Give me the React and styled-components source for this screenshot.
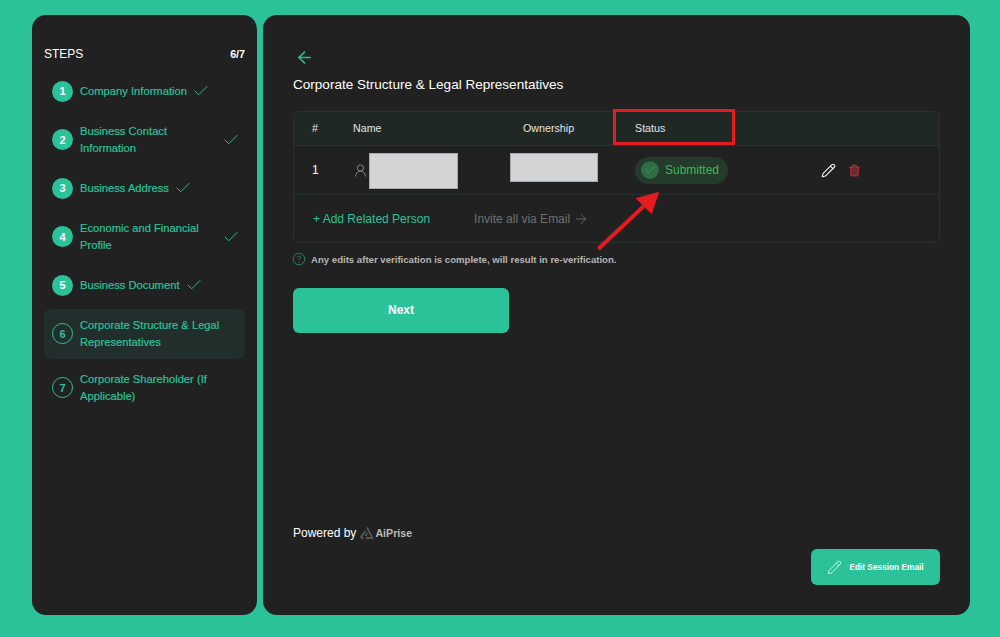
import React from 'react';
import styled, { createGlobalStyle } from 'styled-components';
import { ArrowLeft, ArrowRight, Check, CircleHelp, Pencil, Trash2, UserRound } from 'lucide-react';

const GREEN = '#2bc29a';

const Global = createGlobalStyle`
  html, body { margin: 0; padding: 0; background: ${GREEN}; }
  * { box-sizing: border-box; }
  body { font-family: "Liberation Sans", Arial, sans-serif; }
`;

const Page = styled.div`
  position: relative;
  width: 1000px;
  height: 637px;
  padding: 15px 30px 22px 32px;
  display: flex;
  gap: 6px;
  overflow: hidden;
`;

const Sidebar = styled.aside`
  width: 225px;
  background: #212121;
  border-radius: 14px;
  padding: 31px 12px 0;
`;

const SideHead = styled.div`
  display: flex;
  justify-content: space-between;
  align-items: center;
  height: 16px;
  margin-bottom: 12.5px;
  color: #fff;
  font-size: 12px;
`;

const Count = styled.span`
  font-size: 10.7px;
  font-weight: 700;
`;

const StepList = styled.div`
  display: flex;
  flex-direction: column;
  gap: 7px;
`;

const StepItem = styled.div`
  display: flex;
  align-items: center;
  padding: 8px;
  border-radius: 7px;
  background: ${p => (p.$active ? '#222e2b' : 'transparent')};
  &:last-child { margin-top: -3px; }
`;

const StepNum = styled.div`
  flex: 0 0 21px;
  height: 21px;
  margin: -2px 7px -2px 0;
  border-radius: 50%;
  display: flex;
  align-items: center;
  justify-content: center;
  font-size: 11px;
  font-weight: 700;
  color: ${p => (p.$done ? '#fff' : GREEN)};
  background: ${p => (p.$done ? GREEN : 'transparent')};
  border: ${p => (p.$done ? 'none' : `1px solid ${GREEN}`)};
`;

const StepLabel = styled.div`
  flex: 0 1 auto;
  font-size: 11.2px;
  line-height: 17px;
  color: ${GREEN};
  -webkit-text-stroke: 0.2px ${GREEN};
`;

const StepCheck = styled(Check)`
  flex: 0 0 18px;
  margin: -2px -3px -2px 5px;
  color: ${GREEN};
`;

const Main = styled.main`
  flex: 1;
  background: #212121;
  border-radius: 14px;
  padding: 33px 30px 30px;
  display: flex;
  flex-direction: column;
`;

const BackBtn = styled.div`
  height: 18px;
  padding-left: 2px;
  color: ${GREEN};
  display: flex;
  align-items: center;
`;

const Title = styled.h1`
  margin: 9px 0 16px;
  font-size: 13.55px;
  line-height: 20px;
  font-weight: 400;
  color: #fff;
`;

const Table = styled.div`
  border: 1px solid #24332e;
  border-radius: 6px;
  overflow: hidden;
`;

const gridCols = '41px 170px 112px 186px 1fr';

const HeadRow = styled.div`
  display: grid;
  grid-template-columns: ${gridCols};
  align-items: center;
  height: 34px;
  padding: 0 0 2px 18px;
  background: #202825;
  border-bottom: 1px solid #24332e;
  font-size: 10.7px;
  color: #e4e4e4;
`;

const BodyRow = styled.div`
  display: grid;
  grid-template-columns: ${gridCols};
  align-items: center;
  height: 49px;
  padding-left: 18px;
  border-bottom: 1px solid #24332e;
  color: #fff;
  font-size: 12px;
`;

const NameCell = styled.div`
  display: flex;
  align-items: center;
  gap: 1px;
  color: #8a8a8a;
`;

const Redacted = styled.div`
  width: ${p => p.$w}px;
  height: ${p => p.$h}px;
  background: #d3d4d6;
  border: 1px solid #a9a9a9;
  margin-top: ${p => p.$top || 0}px;
  margin-left: ${p => p.$left || 0}px;
`;

const StatusPill = styled.div`
  display: inline-flex;
  align-items: center;
  gap: 6px;
  width: 93px;
  height: 27px;
  padding-left: 6px;
  border-radius: 14px;
  background: #243a2b;
  color: #3cb853;
  font-size: 12px;
`;

const StatusDot = styled.span`
  width: 18px;
  height: 18px;
  border-radius: 50%;
  background: #2f6b45;
  display: flex;
  align-items: center;
  justify-content: center;
`;

const Actions = styled.div`
  display: flex;
  align-items: center;
  gap: 12px;
`;

const IconBtn = styled.span`
  display: flex;
  color: ${p => p.$color};
`;

const FootRow = styled.div`
  display: flex;
  align-items: center;
  height: 47px;
  padding-left: 19px;
  gap: 44px;
`;

const AddLink = styled.span`
  color: ${GREEN};
  font-size: 12px;
`;

const InviteLink = styled.span`
  display: flex;
  align-items: center;
  gap: 3px;
  color: #6f6f6f;
  font-size: 12px;
`;

const Note = styled.div`
  display: flex;
  align-items: center;
  gap: 5px;
  margin-top: 9px;
  height: 14px;
  font-size: 9.6px;
  font-weight: 700;
  color: #b5b5b5;
  svg { color: ${GREEN}; opacity: .75; margin-left: -1px; }
`;

const NextBtn = styled.button`
  width: 216px;
  height: 45px;
  margin-top: 22px;
  padding: 0 0 2px;
  border: 0;
  border-radius: 6px;
  background: ${GREEN};
  color: #fff;
  font-family: inherit;
  font-size: 12px;
  font-weight: 700;
`;

const Footer = styled.div`
  margin-top: auto;
  display: flex;
  flex-direction: column;
`;

const Powered = styled.div`
  display: flex;
  align-items: center;
  gap: 4px;
  height: 18px;
  font-size: 12px;
  color: #fff;
`;

const Brand = styled.span`
  margin-left: -3px;
  font-weight: 700;
  font-size: 10.7px;
  color: #b9b9b9;
`;

const EditBtn = styled.button`
  align-self: flex-end;
  width: 129px;
  height: 36px;
  margin-top: 7px;
  border: 0;
  border-radius: 6px;
  background: ${GREEN};
  color: #fff;
  display: flex;
  align-items: center;
  justify-content: center;
  gap: 7px;
  font-family: inherit;
  font-size: 8.3px;
  font-weight: 700;
`;

const Highlight = styled.div`
  position: absolute;
  left: 613px;
  top: 109px;
  width: 122px;
  height: 36px;
  border: 3px solid #e21c1f;
`;

const Pointer = styled.svg`
  position: absolute;
  left: 590px;
  top: 185px;
`;

const steps = [
  { n: 1, label: 'Company Information', done: true },
  { n: 2, label: 'Business Contact Information', done: true },
  { n: 3, label: 'Business Address', done: true },
  { n: 4, label: 'Economic and Financial Profile', done: true },
  { n: 5, label: 'Business Document', done: true },
  { n: 6, label: 'Corporate Structure & Legal Representatives', active: true },
  { n: 7, label: 'Corporate Shareholder (If Applicable)' },
];

const AiPriseLogo = () => (
  <svg width="14" height="14" viewBox="0 0 14 14" fill="none" stroke="#555" strokeWidth="1.8">
    <path d="M7 1.5 L12.5 12 H6" />
    <path d="M5.5 5 L1 11 L3.5 13" />
    <path d="M7 7 L5.5 10" />
  </svg>
);

export default function App() {
  return (
    <Page>
      <Global />
      <Sidebar>
        <SideHead>
          <span>STEPS</span>
          <Count>6/7</Count>
        </SideHead>
        <StepList>
          {steps.map(s => (
            <StepItem key={s.n} $active={s.active}>
              <StepNum $done={s.done}>{s.n}</StepNum>
              <StepLabel>{s.label}</StepLabel>
              {s.done && <StepCheck size={18} strokeWidth={1.25} />}
            </StepItem>
          ))}
        </StepList>
      </Sidebar>

      <Main>
        <BackBtn><ArrowLeft size={19} strokeWidth={2} /></BackBtn>
        <Title>Corporate Structure &amp; Legal Representatives</Title>

        <Table>
          <HeadRow>
            <span>#</span>
            <span>Name</span>
            <span>Ownership</span>
            <span>Status</span>
          </HeadRow>
          <BodyRow>
            <span>1</span>
            <NameCell>
              <UserRound size={15} strokeWidth={1.5} />
              <Redacted $w={89} $h={36} $top={2} />
            </NameCell>
            <Redacted $w={88} $h={29} $top={-5} $left={-13} />
            <div><StatusPill>
              <StatusDot><Check size={14} strokeWidth={1.25} /></StatusDot>
              Submitted
            </StatusPill></div>
            <Actions>
              <IconBtn $color="#f0f0f0"><Pencil size={15} strokeWidth={1.75} /></IconBtn>
              <IconBtn $color="#c9383c"><Trash2 size={13} strokeWidth={1.5} fill="#6b2a2c" /></IconBtn>
            </Actions>
          </BodyRow>
          <FootRow>
            <AddLink>+ Add Related Person</AddLink>
            <InviteLink>Invite all via Email <ArrowRight size={16} strokeWidth={1.25} /></InviteLink>
          </FootRow>
        </Table>

        <Note>
          <CircleHelp size={14} strokeWidth={1.25} />
          Any edits after verification is complete, will result in re-verification.
        </Note>

        <NextBtn>Next</NextBtn>

        <Footer>
          <Powered>
            Powered by <AiPriseLogo /> <Brand>AiPrise</Brand>
          </Powered>
          <EditBtn><Pencil size={15} strokeWidth={1.25} /> Edit Session Email</EditBtn>
        </Footer>
      </Main>

      <Highlight />
      <Pointer width="80" height="70" viewBox="0 0 80 70">
        <path d="M8.3 64 L53.7 21.3" stroke="#e21c1f" strokeWidth="4" />
        <path d="M69.3 6.7 L45.7 13.3 L61.7 29.3 Z" fill="#e21c1f" />
      </Pointer>
    </Page>
  );
}
